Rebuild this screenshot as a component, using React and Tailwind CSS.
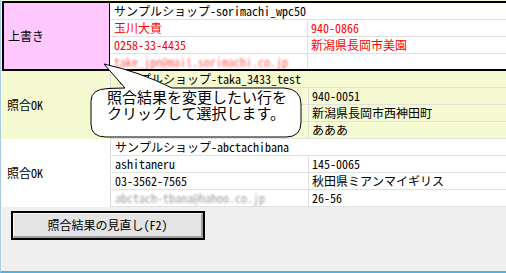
import React from "react";

const FONT = "font-['Noto_Sans_Mono_CJK_JP','Noto_Sans_CJK_JP',monospace] [font-feature-settings:'hwid'] text-[12px] leading-[16px]";

function Sub({ a, b, span, last, h = "h-[17px]", color = "text-black", blurA }) {
  return (
    <div className={`flex ${h} ${last ? "" : "border-b border-[#e1e1e1]"}`}>
      {span ? (
        <div className={`flex-1 pl-[4px] flex items-center whitespace-nowrap overflow-hidden ${color}`}>{a}</div>
      ) : (
        <>
          <div className={`w-[198px] shrink-0 border-r border-[#e1e1e1] pl-[4px] flex items-center whitespace-nowrap overflow-hidden ${color}`}>
            {blurA ? <span className={blurA}>{a}</span> : a}
          </div>
          <div className={`flex-1 pl-[3px] flex items-center whitespace-nowrap overflow-hidden ${color}`}>{b}</div>
        </>
      )}
    </div>
  );
}

export default function App() {
  return (
    <div className={`relative w-[506px] h-[273px] bg-[#efefef] border-l border-[#a9cbe8] border-b-2 border-b-[#56b0dc] overflow-hidden ${FONT}`}>
      <div className="h-full border-l border-[#f7f7f7] flex flex-col">
        <div className="h-px bg-[#f6fad2]" />
        {/* Row 1 selected */}
        <div className="flex bg-white border-2 border-r-0 border-black">
          <div className="w-[106px] shrink-0 bg-[#ffc8ff] border-r border-black flex items-center pl-[4px]">上書き</div>
          <div className="flex-1 flex flex-col">
            <Sub span a="サンプルショップ-sorimachi_wpc50" />
            <Sub a="玉川大貴" b="940-0866" color="text-[#ff0000]" />
            <Sub a="0258-33-4435" b="新潟県長岡市美園" color="text-[#ff0000]" />
            <Sub last h="h-[15px]" a="take_jpn@mail.sorimachi.co.jp" b="" color="text-[#ff2a2a]" blurA="blur-[1.3px] opacity-75" />
          </div>
        </div>
        {/* Row 2 */}
        <div className="flex bg-[#f6fad2]">
          <div className="w-[109px] shrink-0 border-r border-[#dadada] flex items-center pl-[5px]">照合OK</div>
          <div className="flex-1 flex flex-col">
            <Sub span a="サンプルショップ-taka_3433_test" />
            <Sub a="" b="940-0051" />
            <Sub a="" b="新潟県長岡市西神田町" />
            <Sub a="" b="あああ" />
          </div>
        </div>
        {/* Row 3 */}
        <div className="flex bg-white">
          <div className="w-[109px] shrink-0 border-r border-[#dadada] flex items-center pl-[5px]">照合OK</div>
          <div className="flex-1 flex flex-col">
            <Sub span a="サンプルショップ-abctachibana" />
            <Sub a="ashitaneru" b="145-0065" />
            <Sub a="03-3562-7565" b="秋田県ミアンマイギリス" />
            <Sub a="abctach-tbana@hahoo.co.jp" b="26-56" color="text-black" blurA="blur-[1.2px] opacity-40" />
          </div>
        </div>
        {/* Button area */}
        <div className="mt-[4px] ml-[9px] w-[194px] h-[29px] border-2 border-black">
          <div className="h-full border-t border-l border-white border-b-2 border-r-2 border-b-[#a0a0a0] border-r-[#a0a0a0] bg-[#e4e4e4] flex items-center justify-center text-black">
            照合結果の見直し(F2)
          </div>
        </div>
      </div>

      {/* Speech bubble overlay */}
      <svg className="absolute left-[-1px] top-0 pointer-events-none" width="506" height="273" viewBox="0 0 506 273">
        <path
          d="M104,64 Q140,72 172,88 L284,88 Q301,89 301,104 L301,122 Q301,137 286,137 L106,137 Q91,137 91,124 L91,101 Q91,89 108,88.5 L125,88 Z"
          fill="white"
          stroke="black"
          strokeWidth="1"
        />
      </svg>
      <p className="absolute left-[106px] top-[89px] text-[15px] leading-[16px] text-black font-['Noto_Sans_CJK_JP',sans-serif] whitespace-nowrap">
        照合結果を変更したい行を<br />クリックして選択します。
      </p>
    </div>
  );
}
